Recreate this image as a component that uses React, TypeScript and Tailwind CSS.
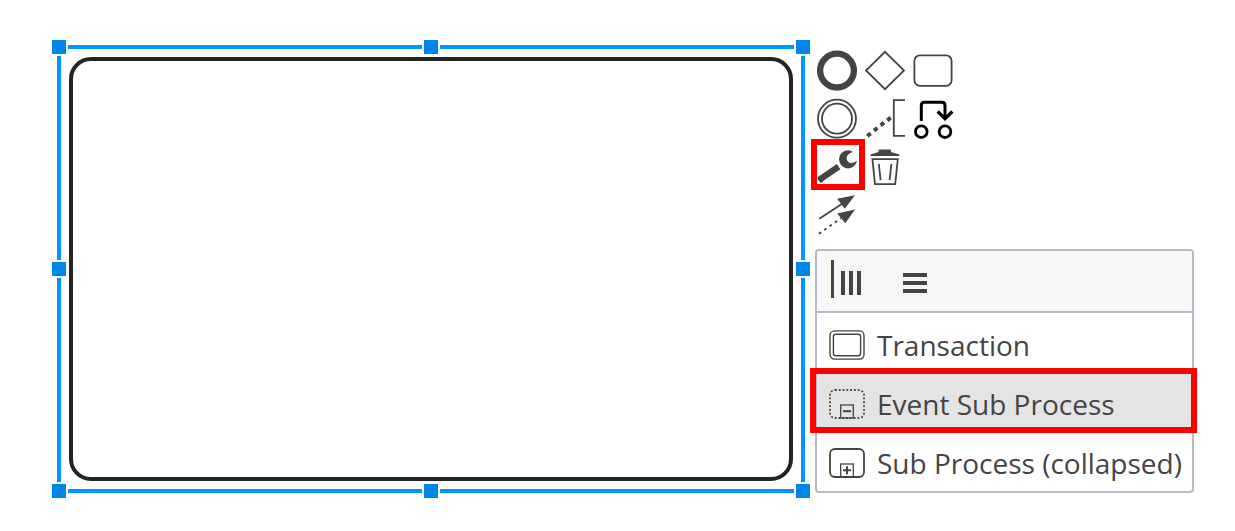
import type { ReactNode } from "react";

type Tool = { label: string; icon: ReactNode; highlighted?: boolean };

const tools: Tool[] = [
  {
    label: "Append end event",
    icon: <circle cx="20" cy="19.6" r="16.9" strokeWidth="6.3" />,
  },
  {
    label: "Append gateway",
    icon: <path d="M20 0.8 39 19.5 20 38.2 1 19.5Z" strokeWidth="1.8" />,
  },
  {
    label: "Append task",
    icon: <rect x="1.4" y="4.4" width="37.2" height="30.4" rx="5.5" strokeWidth="1.8" />,
  },
  {
    label: "Append intermediate event",
    icon: (
      <g strokeWidth="1.8">
        <circle cx="20" cy="19.7" r="19" />
        <circle cx="20" cy="19.7" r="15" />
      </g>
    ),
  },
  {
    label: "Append text annotation",
    icon: (
      <g>
        <path d="M40 1.2H28.8V36.8H40" strokeWidth="1.8" />
        <path
          d="M2.3 37 5.7 34.4M9 31.6 12.4 29M15.6 26.3 19 23.7M22.3 21.3 25.7 18.7"
          strokeWidth="4"
        />
      </g>
    ),
  },
  {
    label: "Append link",
    icon: (
      <g stroke="#000">
        <path d="M8.3 22V6.2Q8.3 3.2 11.3 3.2H29Q32 3.2 32 6.2V19" strokeWidth="3" />
        <path d="M24.7 12.5 32 19.8 39.3 12.5" strokeWidth="3.2" />
        <circle cx="8.3" cy="32.7" r="5.8" strokeWidth="2.8" />
        <circle cx="32" cy="32.7" r="5.8" strokeWidth="2.8" />
      </g>
    ),
  },
  {
    label: "Change type",
    highlighted: true,
    icon: (
      <g>
        <path d="M3 32.4 21.6 19.6" strokeWidth="6.2" />
        <path d="M2.6 31.4 4.2 33.6" strokeWidth="4" strokeLinecap="round" />
        <path
          d="M36 4.9A9 9 0 1 0 39.9 13.6C37.6 15.6 34.4 16.8 32 15.4C29.3 13.8 29 10.4 30.8 8.1C32 6.5 33.8 5.6 36 4.9Z"
          fill="currentColor"
          stroke="none"
        />
      </g>
    ),
  },
  {
    label: "Remove",
    icon: (
      <g strokeWidth="1.8">
        <path
          d="M5.5 9V7.4L13.5 5V3.4Q13.5 2.4 14.5 2.4H25Q26 2.4 26 3.4V5L34.3 7.4V9Z"
          fill="currentColor"
          stroke="none"
        />
        <path d="M7.4 12.2H32.8L30.2 37.2H10Z" />
        <path d="M13.8 17 15.6 33.2M26.4 17 24.6 33.2" />
      </g>
    ),
  },
  {
    label: "Connect",
    icon: (
      <g strokeWidth="1.8">
        <path d="M2.3 23.8 26 8.2" />
        <path d="M1.9 38.8 24 23.2" strokeDasharray="2.8 3.7" />
        <path
          d="M38 0.2 20.2 3.8 27.7 13.7ZM38 14.4 20.2 18.6 28.3 28.2Z"
          fill="currentColor"
          stroke="none"
        />
      </g>
    ),
  },
];

const entries: Tool[] = [
  {
    label: "Transaction",
    icon: (
      <g strokeWidth="1.4">
        <rect x="1" y="0.9" width="34" height="28.2" rx="4.5" />
        <rect x="4.4" y="4.2" width="27.2" height="21.6" rx="2.5" />
      </g>
    ),
  },
  {
    label: "Event Sub Process",
    highlighted: true,
    icon: (
      <g>
        <rect
          x="1"
          y="1"
          width="34"
          height="28"
          rx="5"
          strokeWidth="1.8"
          strokeDasharray="1.8 2"
        />
        <rect x="11.7" y="16" width="12.6" height="13" strokeWidth="1.3" />
        <path d="M14 22.2H22" strokeWidth="2" />
      </g>
    ),
  },
  {
    label: "Sub Process (collapsed)",
    icon: (
      <g>
        <rect x="1" y="1" width="34" height="28" rx="5" strokeWidth="1.8" />
        <rect x="11.7" y="16" width="12.6" height="13" strokeWidth="1.3" />
        <path d="M14 22.2H22M18 18.2V26.2" strokeWidth="2" />
      </g>
    ),
  },
];

const handles = [
  "-top-[7px] -left-[7px] cursor-nwse-resize",
  "-top-[7px] left-1/2 -ml-[9px] cursor-ns-resize",
  "-top-[7px] -right-[7px] cursor-nesw-resize",
  "top-1/2 -mt-[9px] -left-[7px] cursor-ew-resize",
  "top-1/2 -mt-[9px] -right-[7px] cursor-ew-resize",
  "-bottom-[7px] -left-[7px] cursor-nesw-resize",
  "-bottom-[7px] left-1/2 -ml-[9px] cursor-ns-resize",
  "-right-[7px] -bottom-[7px] cursor-nwse-resize",
];

function SelectedShape() {
  return (
    <section
      aria-label="Selected sub process"
      className="relative flex min-w-0 flex-1 border-4 border-[#0096ff] p-2"
    >
      <div className="flex-1 rounded-[22px] border-4 border-[#22242a]" />
      <div className="absolute -inset-1">
        {handles.map((place) => (
          <span
            key={place}
            className={`absolute size-[18px] border-2 border-white bg-[#0086e8] ${place}`}
          />
        ))}
      </div>
    </section>
  );
}

function ContextPad() {
  return (
    <div className="grid w-fit grid-cols-3 gap-2 pt-1.5 pl-0.5">
      {tools.map((tool) => (
        <button
          key={tool.label}
          type="button"
          aria-label={tool.label}
          className={`relative size-10 cursor-pointer ${
            tool.label === "Connect" ? "col-start-1" : ""
          }`}
        >
          <svg viewBox="0 0 40 40" fill="none" stroke="currentColor" className="size-10 overflow-visible">
            {tool.icon}
          </svg>
          {tool.highlighted && (
            <span className="absolute -top-2 -right-2 -bottom-[3px] -left-1.5 border-6 border-[#ff0000]" />
          )}
        </button>
      ))}
    </div>
  );
}

function ReplaceMenu() {
  return (
    <div className="rounded-[4px] border-2 border-[#b7b9c8] bg-white">
      <div className="flex h-[62px] items-center gap-9 rounded-t-[2px] border-b-2 border-[#b7b9c8] bg-[#f7f7f7] px-3">
        <button type="button" aria-label="Parallel multi instance" className="cursor-pointer">
          <svg viewBox="0 1 36 40" fill="currentColor" className="h-10 w-9 overflow-visible">
            <path d="M2 0H5V38H2ZM12 11H16V35H12ZM20 11H24V35H20ZM28 11H32V35H28Z" />
          </svg>
        </button>
        <button type="button" aria-label="Sequential multi instance" className="cursor-pointer">
          <svg viewBox="0 1 36 40" fill="currentColor" className="h-10 w-9 overflow-visible">
            <path d="M2 13H26V17H2ZM2 21H26V25H2ZM2 29H26V33H2Z" />
          </svg>
        </button>
      </div>
      <ul className="pt-px">
        {entries.map((entry) => (
          <li key={entry.label} className="relative">
            <button
              type="button"
              className={`flex h-[59px] w-full cursor-pointer items-center gap-3 px-3 pt-0.5 text-left text-[28px] leading-9 whitespace-nowrap ${
                entry.highlighted ? "bg-[#e4e4e4]" : ""
              }`}
            >
              <svg
                viewBox="0 0 36 30"
                fill="none"
                stroke="currentColor"
                className="h-[30px] w-9 shrink-0"
              >
                {entry.icon}
              </svg>
              {entry.label}
            </button>
            {entry.highlighted && (
              <span className="pointer-events-none absolute -top-[5px] -right-[5px] -bottom-px -left-[7px] z-10 border-6 border-[#ff0000]" />
            )}
          </li>
        ))}
      </ul>
    </div>
  );
}

export default function App() {
  return (
    <main className="flex gap-2.5 bg-white pt-[45px] pr-[41px] pb-[38px] pl-[57px] font-['Open_Sans',sans-serif] text-[#444]">
      <SelectedShape />
      <aside className="flex w-[379px] shrink-0 flex-col gap-3.5">
        <ContextPad />
        <ReplaceMenu />
      </aside>
    </main>
  );
}
